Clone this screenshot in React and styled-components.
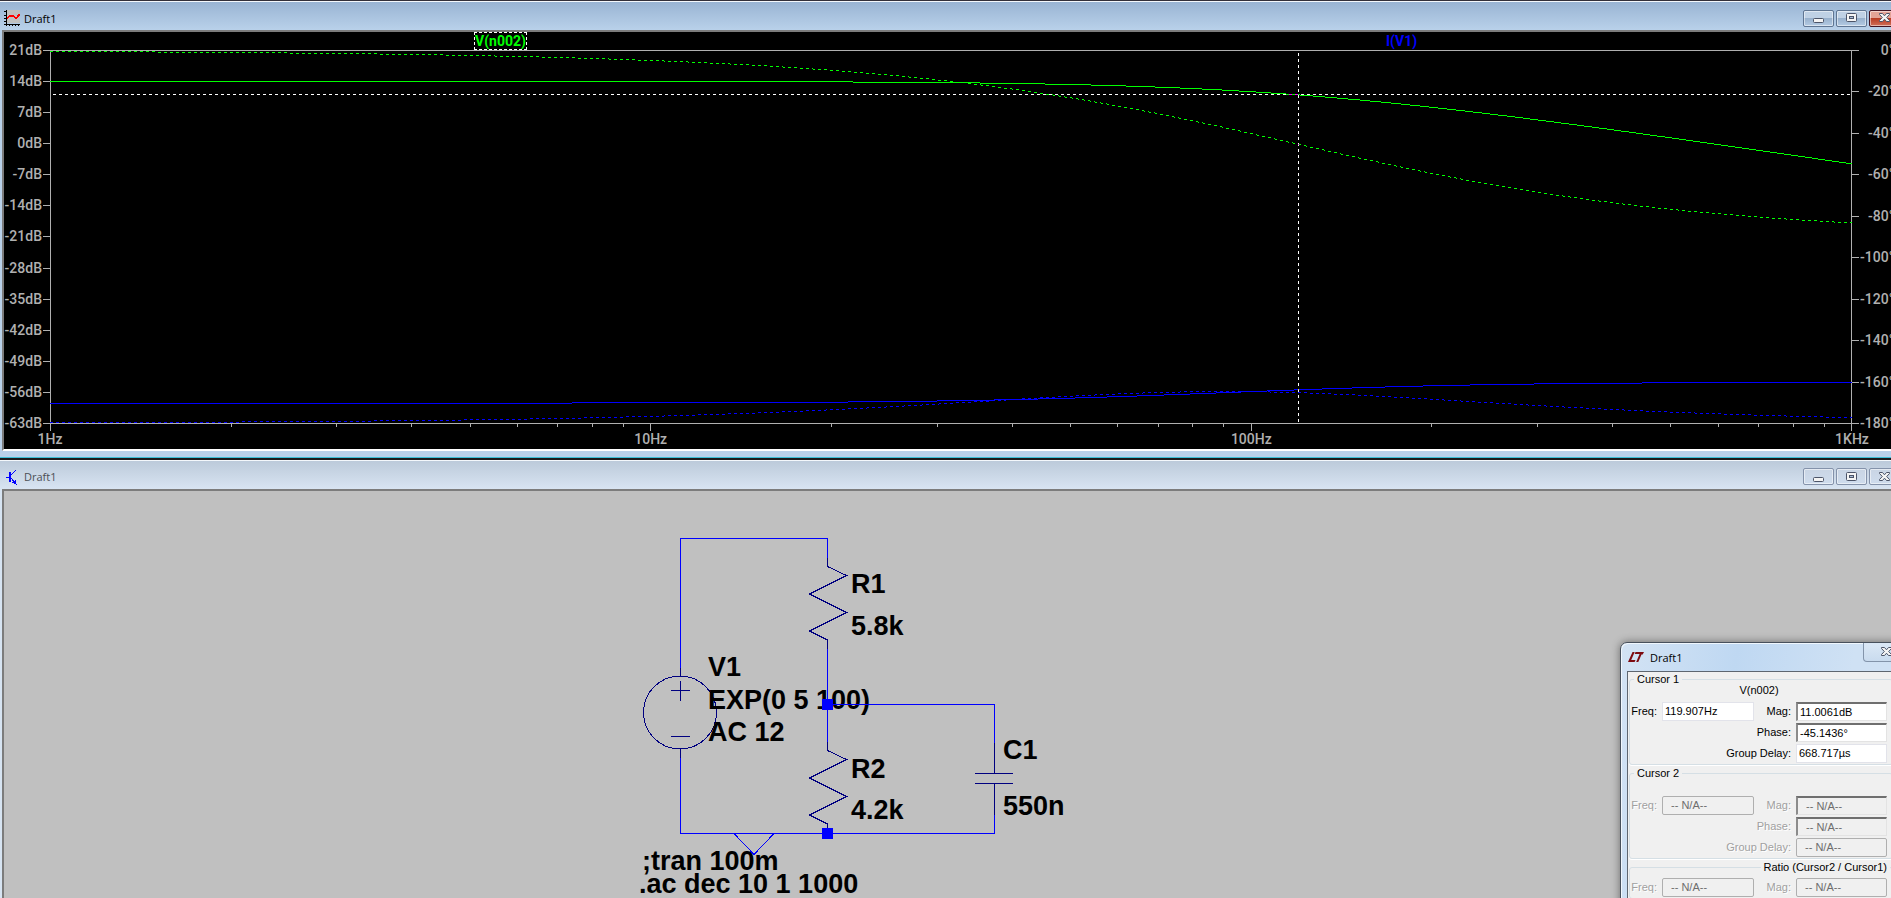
import React from 'react'
import styled, { createGlobalStyle, css } from 'styled-components'

const GlobalStyle = createGlobalStyle`
  * {
    box-sizing: border-box;
  }
  body {
    margin: 0;
    overflow: hidden;
    background: #b9d1ea;
  }
`

/* ---------- circuit maths ---------- */

const R1 = 5800
const R2 = 4200
const C1 = 550e-9
const VAC = 12

const PLOT_W = 1802
const PLOT_H = 374
const DB_TOP = 21
const DB_SPAN = 84
const DECADES = 3

const toX = (f) => 0.5 + (Math.log10(f) / DECADES) * (PLOT_W - 1)
const dbToY = (db) => 0.5 + ((DB_TOP - db) / DB_SPAN) * (PLOT_H - 1)
const degToY = (deg) => 0.5 + (-deg / 180) * (PLOT_H - 1)

const response = (f) => {
  const w = 2 * Math.PI * f
  const x = w * R2 * C1
  // Z = R1 + R2 / (1 + jx)
  const re = R1 + R2 / (1 + x * x)
  const im = (-R2 * x) / (1 + x * x)
  const z = Math.hypot(re, im)
  const wrc = w * C1 * ((R1 * R2) / (R1 + R2))
  return {
    vMag: 20 * Math.log10((VAC * R2) / (R1 + R2)) - 10 * Math.log10(1 + wrc * wrc),
    vPhase: (-Math.atan(wrc) * 180) / Math.PI,
    iMag: 20 * Math.log10(VAC / z),
    iPhase: -180 - (Math.atan2(im, re) * 180) / Math.PI,
  }
}

// horizontal runs on whole pixel rows, so flat parts of a curve stay sharp
const tracePath = (key, toY, dashed) => {
  let d = ''
  let start = null
  let row = null
  for (let x = 0; x <= PLOT_W; x++) {
    const f = 10 ** ((x / (PLOT_W - 1)) * DECADES)
    const visible = x < PLOT_W && (!dashed || x % 6 < 3)
    const y = visible ? Math.floor(toY(response(f)[key])) + 0.5 : null
    if (y !== row) {
      if (row !== null) d += `M${start} ${row}H${x}`
      start = x
      row = y
    }
  }
  return d
}

const minorTicks = [0, 1, 2].flatMap((d) => [2, 3, 4, 5, 6, 7, 8, 9].map((k) => k * 10 ** d))

const dbLabels = Array.from({ length: 13 }, (_, i) => `${21 - i * 7}dB`)
const degLabels = Array.from({ length: 10 }, (_, i) => `${i ? -20 * i : 0}°`)
const hzLabels = ['1Hz', '10Hz', '100Hz', '1KHz']

/* ---------- windows ---------- */

const Desktop = styled.main`
  position: relative;
  display: grid;
  grid-template-rows: 51fr 49fr;
  grid-template-columns: calc(100% + 14px);
  height: 100vh;
  overflow: hidden;
`

const Window = styled.section`
  display: flex;
  flex-direction: column;
  min-height: 0;
  margin-bottom: ${({ $active }) => ($active ? 0 : '-20px')};
  padding: 0 4px 6px 2px;
  background: ${({ $active }) => ($active ? '#b9d1ea' : '#d7e4f2')};
  border-top: ${({ $active }) => ($active ? '1px solid #33303a' : '2px solid #1c1a1c')};
  border-bottom: 1px solid #3cbfd6;
`

const TitleBar = styled.header`
  display: flex;
  align-items: center;
  gap: 4px;
  height: 29px;
  margin: 0 -4px 0 -2px;
  padding: 4px 5px 0 4px;
  flex: none;
  border-top: 1px solid #f4f8fc;
  background: ${({ $active }) =>
    $active ? 'linear-gradient(#99b4d3, #b9d1ea)' : 'linear-gradient(#bccada, #d8e4f2)'};
  color: ${({ $active }) => ($active ? '#000' : '#4c4f55')};
`

const Title = styled.h1`
  flex: 1;
  margin: 0;
  padding-top: 1px;
  font: 400 11px/16px 'Open Sans', 'Noto Sans', sans-serif;
`

const WindowButtons = styled.div`
  display: flex;
  gap: 2px;
  align-items: center;
  height: 100%;
`

const WindowButton = styled.button`
  display: flex;
  align-items: center;
  justify-content: center;
  width: 31px;
  height: 17px;
  padding: 0;
  border: 1px solid #5f7592;
  border-radius: 2px;
  box-shadow: inset 0 0 0 1px rgba(255, 255, 255, 0.5);
  background: linear-gradient(#bfd1e5 45%, #98b1cd 50%, #b4cbe3);
  ${({ $inactive }) =>
    $inactive &&
    css`
      border-color: #8492aa;
      background: linear-gradient(#c9d5e4, #cfdced);
    `}
  ${({ $danger }) =>
    $danger &&
    css`
      border-color: #431422;
      background: linear-gradient(#e4a396 45%, #b93c24 50%, #d0705a);
    `}
`

const Client = styled.div`
  flex: 1;
  min-height: 0;
  border: 2px solid;
  border-color: #7c7c7c #e3e3e3 #fff #7c7c7c;
  background: ${({ $color }) => $color};
  overflow: hidden;
`

function MinimizeIcon() {
  return (
    <svg width="13" height="12" viewBox="0 0 13 12">
      <rect x="1.5" y="6.5" width="10" height="4" rx="1" fill="#f4f4f4" stroke="#4c5468" />
    </svg>
  )
}

function RestoreIcon() {
  return (
    <svg width="13" height="12" viewBox="0 0 13 12">
      <rect x="1.5" y="1.5" width="10" height="8" rx="1" fill="#f4f4f4" stroke="#4c5468" />
      <rect x="4.5" y="4.5" width="4" height="2" fill="#a9bdd6" stroke="#4c5468" />
    </svg>
  )
}

function CloseIcon() {
  return (
    <svg width="13" height="12" viewBox="0 0 13 12">
      <path
        d="M1.5 1.5h3l2 2.3 2-2.3h3v1L8.7 5.5l2.8 3v1h-3l-2-2.3-2 2.3h-3v-1l2.8-3-2.8-3z"
        fill="#f4f4f4"
        stroke="#4c5468"
      />
    </svg>
  )
}

function PlotIcon() {
  return (
    <svg width="16" height="16" viewBox="0 0 16 16" shapeRendering="crispEdges">
      <rect x="3" width="13" height="13" fill="#c0c0c0" />
      <path d="M2.5 0v16M0 14.5h16" stroke="#000" fill="none" />
      <path d="M0 1.5h3M0 5.5h3M0 8.5h3M0 11.5h3M5.5 14v2M8.5 14v2M11.5 14v2M14.5 14v2" stroke="#000" />
      <path d="M3 8.5L6 5.5h3l2 2h2L16 4" stroke="#f00" strokeWidth="2" fill="none" />
    </svg>
  )
}

function SchematicIcon() {
  return (
    <svg width="16" height="16" viewBox="0 0 16 16" shapeRendering="crispEdges">
      <path d="M2 8.5h4M7 6l5-5M7 9l5 6" stroke="#00f" fill="none" />
      <path d="M6 3v10" stroke="#00f" strokeWidth="2" />
      <path d="M11.5 11l1 4.5L8 13.5z" fill="#00f" />
    </svg>
  )
}

function Controls({ active }) {
  return (
    <WindowButtons>
      <WindowButton $inactive={!active} aria-label="Minimize">
        <MinimizeIcon />
      </WindowButton>
      <WindowButton $inactive={!active} aria-label="Restore">
        <RestoreIcon />
      </WindowButton>
      <WindowButton $inactive={!active} $danger={active} aria-label="Close">
        <CloseIcon />
      </WindowButton>
    </WindowButtons>
  )
}

/* ---------- waveform viewer ---------- */

const PlotGrid = styled.div`
  display: grid;
  grid-template-columns: 46px 1fr 47px;
  grid-template-rows: 18px 1fr 25px;
  height: 100%;
  font: 500 14px/13px Roboto, sans-serif;
  color: #b0b0b0;
`

const TraceNames = styled.div`
  grid-column: 2;
  display: grid;
  grid-template-columns: 1fr 1fr;
  justify-items: center;
`

const TraceName = styled.button`
  padding: 0;
  border: 1px ${({ $selected }) => ($selected ? 'dashed #fff' : 'solid transparent')};
  background: none;
  color: ${({ $color }) => $color};
  font: 700 14px/16px Roboto, sans-serif;
`

const Axis = styled.div`
  grid-row: 2;
  grid-column: ${({ $right }) => ($right ? 3 : 1)};
  display: flex;
  flex-direction: column;
  justify-content: space-between;
  margin: -6px 0;
`

const AxisLabel = styled.span`
  display: flex;
  align-items: center;
  justify-content: flex-end;
  gap: 1px;
  height: 13px;
  white-space: nowrap;
  ${({ $right }) =>
    $right
      ? css`
          justify-content: space-between;
          padding-right: 5px;
          &::before {
            content: '';
            width: 7px;
            height: 1px;
            background: #b0b0b0;
          }
        `
      : css`
          &::after {
            content: '';
            flex: none;
            width: 7px;
            height: 1px;
            background: #b0b0b0;
          }
        `}
`

const FreqAxis = styled.div`
  grid-column: 2;
  grid-row: 3;
  display: flex;
  justify-content: space-between;
  padding-top: 9px;
`

const FreqLabel = styled.span`
  display: flex;
  justify-content: center;
  width: 0;
  white-space: nowrap;
`

const PlotSvg = styled.svg`
  grid-column: 2;
  grid-row: 2;
  display: block;
  width: 100%;
  height: 100%;
  overflow: visible;
  fill: none;
  shape-rendering: crispEdges;
  isolation: isolate;
  * {
    vector-effect: non-scaling-stroke;
  }
`

const Cursor = styled.path`
  stroke: #fff;
  stroke-dasharray: 3 3;
  mix-blend-mode: difference;
`

function WaveformPlot() {
  const cursorX = Math.floor(toX(119.907)) + 0.5
  const cursorY = Math.floor(dbToY(11.0061)) + 0.5
  return (
    <PlotGrid>
      <TraceNames>
        <TraceName $selected $color="#0f0">V(n002)</TraceName>
        <TraceName $color="#00f">I(V1)</TraceName>
      </TraceNames>
      <Axis>
        {dbLabels.map((label) => (
          <AxisLabel key={label}>{label}</AxisLabel>
        ))}
      </Axis>
      <PlotSvg viewBox={`0 0 ${PLOT_W} ${PLOT_H}`} preserveAspectRatio="none">
        <rect x="0.5" y="0.5" width={PLOT_W - 1} height={PLOT_H - 1} stroke="#b0b0b0" />
        {minorTicks.map((f) => (
          <path key={f} d={`M${Math.floor(toX(f)) + 0.5} ${PLOT_H}v3`} stroke="#b0b0b0" />
        ))}
        {[1, 10, 100, 1000].map((f) => (
          <path key={f} d={`M${Math.floor(toX(f)) + 0.5} ${PLOT_H}v7`} stroke="#b0b0b0" />
        ))}
        <path d={tracePath('iMag', dbToY)} stroke="#00f" />
        <path d={tracePath('iPhase', degToY, true)} stroke="#00f" />
        <path d={tracePath('vPhase', degToY, true)} stroke="#0f0" />
        <path d={tracePath('vMag', dbToY)} stroke="#0f0" />
        <Cursor d={`M3 ${cursorY}H${PLOT_W - 1}`} />
        <Cursor d={`M${cursorX} 3V${PLOT_H - 1}`} />
      </PlotSvg>
      <Axis $right>
        {degLabels.map((label) => (
          <AxisLabel key={label} $right>
            {label}
          </AxisLabel>
        ))}
      </Axis>
      <FreqAxis>
        {hzLabels.map((label) => (
          <FreqLabel key={label}>{label}</FreqLabel>
        ))}
      </FreqAxis>
    </PlotGrid>
  )
}

/* ---------- schematic ---------- */

const Sheet = styled.svg`
  display: block;
  width: 100%;
  height: 100%;
  fill: none;
  shape-rendering: crispEdges;
`

const Wire = styled.path`
  stroke: #00f;
`

const Symbol = styled.g`
  stroke: #000080;
`

const Note = styled.text`
  fill: #000;
  font: 700 27px 'Liberation Sans', Arial, sans-serif;
  white-space: pre;
`

function Resistor({ x, y }) {
  return (
    <path d={`M${x} ${y - 9}v9l19 9-37 18.5 37 18.5-37 18.5 18 9v9`} />
  )
}

function Schematic() {
  return (
    <Sheet>
      <g transform="translate(-4 -491)">
        <Symbol>
          <circle cx="680" cy="712.5" r="36.5" />
          <path d="M671 690.5h19M680.5 681v20M671 736.5h19" />
        </Symbol>
        <Note x="851" y="593">R1</Note>
        <Note x="851" y="635">5.8k</Note>
        <Note x="708" y="676">V1</Note>
        <Note x="708" y="709">EXP(0 5 100)</Note>
        <Note x="708" y="741">AC 12</Note>
        <Note x="851" y="778">R2</Note>
        <Note x="851" y="819">4.2k</Note>
        <Note x="1003" y="759">C1</Note>
        <Note x="1003" y="815">550n</Note>
        <Note x="642" y="870">;tran 100m</Note>
        <Note x="639" y="893">.ac dec 10 1 1000</Note>
        <Wire d="M680.5 668V538.5H827.5V558M827.5 648V742M827.5 704.5H994.5V743M994.5 815V833.5H680.5V757" />
        <Wire d="M734 833.5l20 21 20-21" />
        <Symbol>
          <Resistor x={827.5} y={566.5} />
          <Resistor x={827.5} y={750.5} />
          <path d="M680.5 668v8M680.5 749v9" />
          <path d="M994.5 743v30.5M975 773.5h38M975 783.5h38M994.5 783.5v31.5" />
        </Symbol>
        <rect x="822" y="699" width="11" height="11" fill="#00f" />
        <rect x="822" y="828" width="11" height="11" fill="#00f" />
      </g>
    </Sheet>
  )
}

/* ---------- cursor dialog ---------- */

const Dialog = styled.aside`
  position: absolute;
  left: calc(100% - 271px);
  top: calc(100% - 256px);
  width: 290px;
  padding: 0 7px;
  border: 1px solid #47505c;
  border-radius: 7px 7px 0 0;
  box-shadow: inset 1px 1px 0 #f0f7fd, 0 0 8px rgba(0, 0, 0, 0.45);
  background: linear-gradient(100deg, #d3e3f4, #bfd8f2 35%, #cfe1f4 70%);
  font: 400 11px/14px 'Liberation Sans', Arial, sans-serif;
  color: #000;
`

const DialogTitle = styled.header`
  display: flex;
  align-items: center;
  gap: 6px;
  height: 28px;
`

const DialogClose = styled.button`
  align-self: flex-start;
  display: flex;
  align-items: center;
  justify-content: center;
  width: 46px;
  height: 19px;
  margin-right: -7px;
  padding: 0;
  border: 1px solid #8394aa;
  border-top: 0;
  border-radius: 0 0 4px 4px;
  background: linear-gradient(#dbe8f6, #c9dbee);
`

const DialogBody = styled.form`
  display: flex;
  flex-direction: column;
  gap: 1px;
  margin-left: -1px;
  padding: 0 0 20px 1px;
  border: 1px solid #5e6670;
  background: #f0f0f0;
`

const Group = styled.fieldset`
  margin: 0 8px 0 0;
  padding: 0 0 1px;
  border: 1px solid #d5dfe5;
  border-radius: 3px;
  box-shadow: 0 1px 0 #fff;
`

const Legend = styled.legend`
  margin: ${({ $right }) => ($right ? '0 2px 0 auto' : '0 0 0 4px')};
  padding: 0 3px;
`

const TraceTitle = styled.div`
  height: ${({ $collapsed }) => ($collapsed ? '3px' : '15px')};
  padding-right: 4px;
  line-height: 8px;
  text-align: center;
`

const Fields = styled.div`
  display: grid;
  grid-template-columns: 28px 92px 34px 91px;
  grid-auto-rows: 20px;
  column-gap: 4px;
  row-gap: 1px;
  align-items: center;
`

const FieldLabel = styled.label`
  grid-column: ${({ $wide }) => ($wide ? '1 / 4' : 'auto')};
  justify-self: end;
  padding-right: 1px;
  white-space: nowrap;
  color: ${({ $disabled }) => ($disabled ? '#a0a0a0' : '#000')};
  text-shadow: ${({ $disabled }) => ($disabled ? '1px 1px 0 #fff' : 'none')};
`

const Field = styled.input`
  width: 100%;
  height: 19px;
  padding: 0 2px;
  border: ${({ $sunken }) => ($sunken ? '1px solid #e3e3e3' : '1px solid #e2e3ea')};
  background: #fff;
  color: #000;
  font: inherit;
  ${({ $sunken }) =>
    $sunken &&
    css`
      border-top: 2px solid #6f6f6f;
      border-left: 2px solid #8c8c8c;
    `}
  &:disabled {
    padding-left: 8px;
    background: #f0f0f0;
    color: #6d6d6d;
    ${({ $sunken }) =>
      !$sunken &&
      css`
        border-color: #afafaf;
        border-radius: 2px;
      `}
  }
`

function LinearLogo() {
  return (
    <svg width="16" height="12" viewBox="0 0 16 12">
      <path d="M4.5 1h2.2L3.2 9h4.3L6.6 11H0zM7.5 1H16l-1.3 2.6h-1.2L10.3 11H8.2l3.4-8H6.7z" fill="#7d0a10" />
    </svg>
  )
}

function CursorGroup({ id, legend, trace: name, values, disabled, ratio }) {
  const na = '-- N/A--'
  const v = values || { freq: na, mag: na, phase: na, delay: na }
  return (
    <Group>
      <Legend $right={ratio}>{legend}</Legend>
      <TraceTitle $collapsed={ratio}>{name}</TraceTitle>
      <Fields>
        <FieldLabel htmlFor={`${id}-freq`} $disabled={disabled}>Freq:</FieldLabel>
        <Field id={`${id}-freq`} defaultValue={v.freq} disabled={disabled} />
        <FieldLabel htmlFor={`${id}-mag`} $disabled={disabled}>Mag:</FieldLabel>
        <Field id={`${id}-mag`} defaultValue={v.mag} disabled={disabled} $sunken={!ratio} />
        {!ratio && (
          <>
            <FieldLabel htmlFor={`${id}-phase`} $wide $disabled={disabled}>Phase:</FieldLabel>
            <Field id={`${id}-phase`} defaultValue={v.phase} disabled={disabled} $sunken />
            <FieldLabel htmlFor={`${id}-delay`} $wide $disabled={disabled}>Group Delay:</FieldLabel>
            <Field id={`${id}-delay`} defaultValue={v.delay} disabled={disabled} />
          </>
        )}
      </Fields>
    </Group>
  )
}

function CursorDialog() {
  return (
    <Dialog>
      <DialogTitle>
        <LinearLogo />
        <Title>Draft1</Title>
        <DialogClose aria-label="Close">
          <CloseIcon />
        </DialogClose>
      </DialogTitle>
      <DialogBody>
        <CursorGroup
          id="c1"
          legend="Cursor 1"
          trace="V(n002)"
          values={{ freq: '119.907Hz', mag: '11.0061dB', phase: '-45.1436°', delay: '668.717µs' }}
        />
        <CursorGroup id="c2" legend="Cursor 2" disabled />
        <CursorGroup id="ratio" legend="Ratio (Cursor2 / Cursor1)" disabled ratio />
      </DialogBody>
    </Dialog>
  )
}

export default function App() {
  return (
    <>
      <GlobalStyle />
      <Desktop>
        <Window $active>
          <TitleBar $active>
            <PlotIcon />
            <Title>Draft1</Title>
            <Controls active />
          </TitleBar>
          <Client $color="#000">
            <WaveformPlot />
          </Client>
        </Window>
        <Window>
          <TitleBar>
            <SchematicIcon />
            <Title>Draft1</Title>
            <Controls />
          </TitleBar>
          <Client $color="#c0c0c0">
            <Schematic />
          </Client>
        </Window>
        <CursorDialog />
      </Desktop>
    </>
  )
}
